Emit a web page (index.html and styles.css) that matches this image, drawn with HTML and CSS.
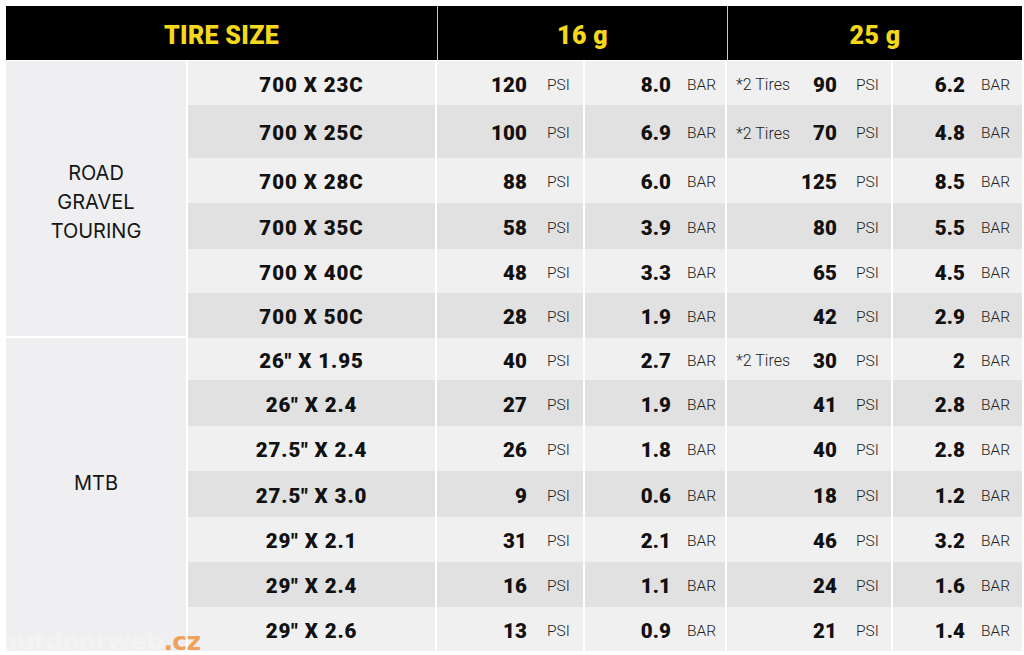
FILE: index.html
```html
<!DOCTYPE html>
<html lang="en">
<head>
<meta charset="utf-8">
<title>Tire size chart</title>
<link rel="stylesheet" href="styles.css">
</head>
<body>
<div class="sheet">
  <div class="head">
    <div class="h-cell">TIRE SIZE</div>
    <div class="h-cell sep">16 g</div>
    <div class="h-cell sep">25 g</div>
  </div>
  <div class="chart">
    <div class="cat cat-road">ROAD<br>GRAVEL<br>TOURING</div>
    <div class="cat cat-mtb">MTB</div>

    <div class="row">
      <div class="size">700 X 23C</div>
      <div class="val p1"><b>120</b><span>PSI</span></div>
      <div class="val b1"><b>8.0</b><span>BAR</span></div>
      <div class="val p2"><i>*2 Tires</i><b>90</b><span>PSI</span></div>
      <div class="val b2"><b>6.2</b><span>BAR</span></div>
    </div>
    <div class="row alt">
      <div class="size">700 X 25C</div>
      <div class="val p1"><b>100</b><span>PSI</span></div>
      <div class="val b1"><b>6.9</b><span>BAR</span></div>
      <div class="val p2"><i>*2 Tires</i><b>70</b><span>PSI</span></div>
      <div class="val b2"><b>4.8</b><span>BAR</span></div>
    </div>
    <div class="row">
      <div class="size">700 X 28C</div>
      <div class="val p1"><b>88</b><span>PSI</span></div>
      <div class="val b1"><b>6.0</b><span>BAR</span></div>
      <div class="val p2"><b>125</b><span>PSI</span></div>
      <div class="val b2"><b>8.5</b><span>BAR</span></div>
    </div>
    <div class="row alt">
      <div class="size">700 X 35C</div>
      <div class="val p1"><b>58</b><span>PSI</span></div>
      <div class="val b1"><b>3.9</b><span>BAR</span></div>
      <div class="val p2"><b>80</b><span>PSI</span></div>
      <div class="val b2"><b>5.5</b><span>BAR</span></div>
    </div>
    <div class="row">
      <div class="size">700 X 40C</div>
      <div class="val p1"><b>48</b><span>PSI</span></div>
      <div class="val b1"><b>3.3</b><span>BAR</span></div>
      <div class="val p2"><b>65</b><span>PSI</span></div>
      <div class="val b2"><b>4.5</b><span>BAR</span></div>
    </div>
    <div class="row alt">
      <div class="size">700 X 50C</div>
      <div class="val p1"><b>28</b><span>PSI</span></div>
      <div class="val b1"><b>1.9</b><span>BAR</span></div>
      <div class="val p2"><b>42</b><span>PSI</span></div>
      <div class="val b2"><b>2.9</b><span>BAR</span></div>
    </div>
    <div class="row">
      <div class="size">26″ X 1.95</div>
      <div class="val p1"><b>40</b><span>PSI</span></div>
      <div class="val b1"><b>2.7</b><span>BAR</span></div>
      <div class="val p2"><i>*2 Tires</i><b>30</b><span>PSI</span></div>
      <div class="val b2"><b>2</b><span>BAR</span></div>
    </div>
    <div class="row alt">
      <div class="size">26″ X 2.4</div>
      <div class="val p1"><b>27</b><span>PSI</span></div>
      <div class="val b1"><b>1.9</b><span>BAR</span></div>
      <div class="val p2"><b>41</b><span>PSI</span></div>
      <div class="val b2"><b>2.8</b><span>BAR</span></div>
    </div>
    <div class="row">
      <div class="size">27.5″ X 2.4</div>
      <div class="val p1"><b>26</b><span>PSI</span></div>
      <div class="val b1"><b>1.8</b><span>BAR</span></div>
      <div class="val p2"><b>40</b><span>PSI</span></div>
      <div class="val b2"><b>2.8</b><span>BAR</span></div>
    </div>
    <div class="row alt">
      <div class="size">27.5″ X 3.0</div>
      <div class="val p1"><b>9</b><span>PSI</span></div>
      <div class="val b1"><b>0.6</b><span>BAR</span></div>
      <div class="val p2"><b>18</b><span>PSI</span></div>
      <div class="val b2"><b>1.2</b><span>BAR</span></div>
    </div>
    <div class="row">
      <div class="size">29″ X 2.1</div>
      <div class="val p1"><b>31</b><span>PSI</span></div>
      <div class="val b1"><b>2.1</b><span>BAR</span></div>
      <div class="val p2"><b>46</b><span>PSI</span></div>
      <div class="val b2"><b>3.2</b><span>BAR</span></div>
    </div>
    <div class="row alt">
      <div class="size">29″ X 2.4</div>
      <div class="val p1"><b>16</b><span>PSI</span></div>
      <div class="val b1"><b>1.1</b><span>BAR</span></div>
      <div class="val p2"><b>24</b><span>PSI</span></div>
      <div class="val b2"><b>1.6</b><span>BAR</span></div>
    </div>
    <div class="row">
      <div class="size">29″ X 2.6</div>
      <div class="val p1"><b>13</b><span>PSI</span></div>
      <div class="val b1"><b>0.9</b><span>BAR</span></div>
      <div class="val p2"><b>21</b><span>PSI</span></div>
      <div class="val b2"><b>1.4</b><span>BAR</span></div>
    </div>
  </div>
  <div class="watermark">outdoorweb<span>.cz</span></div>
</div>
</body>
</html>
```

FILE: styles.css
```css
* { box-sizing: border-box; }

html, body {
  margin: 0;
  padding: 0;
  background: #ffffff;
}

body {
  font-family: Roboto, "Liberation Sans", sans-serif;
  color: #111111;
  overflow: hidden;
}

.sheet {
  position: relative;
  width: 1024px;
  height: 655px;
  padding: 6px 2px 0 6px;
}

.head {
  display: grid;
  grid-template-columns: 431px 290px 1fr;
  height: 54px;
  background: #000000;
}

.h-cell {
  display: flex;
  align-items: center;
  justify-content: center;
  color: #f4d81c;
  font-weight: 900;
  font-size: 25px;
  letter-spacing: 0.3px;
  padding-top: 5px;
}

.h-cell.sep {
  border-left: 1px solid #c8c8c8;
}

.chart {
  display: grid;
  margin-top: 1px;
  grid-template-columns: 180px 247px 146px 140px 164px 1fr;
  grid-template-rows: 44px 53px 45px 46px 44px 45px 42px 46px 45px 46px 45px 45px 44px;
  column-gap: 2px;
}

.row { display: contents; }

.row > div {
  background: #f0f0f1;
  padding-top: 3px;
}
.row.alt > div { background: #e1e1e1; }

.cat {
  grid-column: 1;
  background: #efeff1;
  display: flex;
  align-items: center;
  justify-content: center;
  text-align: center;
  font-family: Inter, Roboto, sans-serif;
  font-size: 20px;
  line-height: 29px;
  color: #151515;
}

.cat-road {
  grid-row: 1 / 7;
  border-bottom: 2px solid #ffffff;
  padding-top: 8px;
}

.cat-mtb {
  grid-row: 7 / 14;
  padding-bottom: 22px;
}

.size {
  grid-column: 2;
  display: flex;
  align-items: center;
  justify-content: center;
  font-weight: 900;
  font-size: 20.5px;
  letter-spacing: 0.9px;
}

.val {
  display: flex;
  align-items: center;
  justify-content: flex-end;
  font-size: 20px;
}

.val b {
  font-weight: 900;
  font-size: 20.5px;
  letter-spacing: 0.1px;
}

.val span {
  font-weight: 300;
  font-size: 15.5px;
  color: #222222;
}

.val i {
  font-style: normal;
  font-weight: 300;
  font-size: 16px;
  color: #222222;
  margin-right: auto;
  padding-left: 9px;
}

.p1 b { margin-right: 20px; }
.p1 span { width: 36px; }
.b1 b { margin-right: 16px; }
.b1 span { width: 38px; }
.p2 b { margin-right: 19px; }
.p2 span { width: 35px; }
.b2 b { margin-right: 16px; }
.b2 span { width: 41px; }

.watermark {
  position: absolute;
  left: 0;
  top: 627px;
  font-family: "DejaVu Sans", sans-serif;
  font-weight: 700;
  font-size: 25px;
  letter-spacing: -0.6px;
  color: rgba(255, 255, 255, 0.3);
}

.watermark span {
  color: #efa25c;
}
```
